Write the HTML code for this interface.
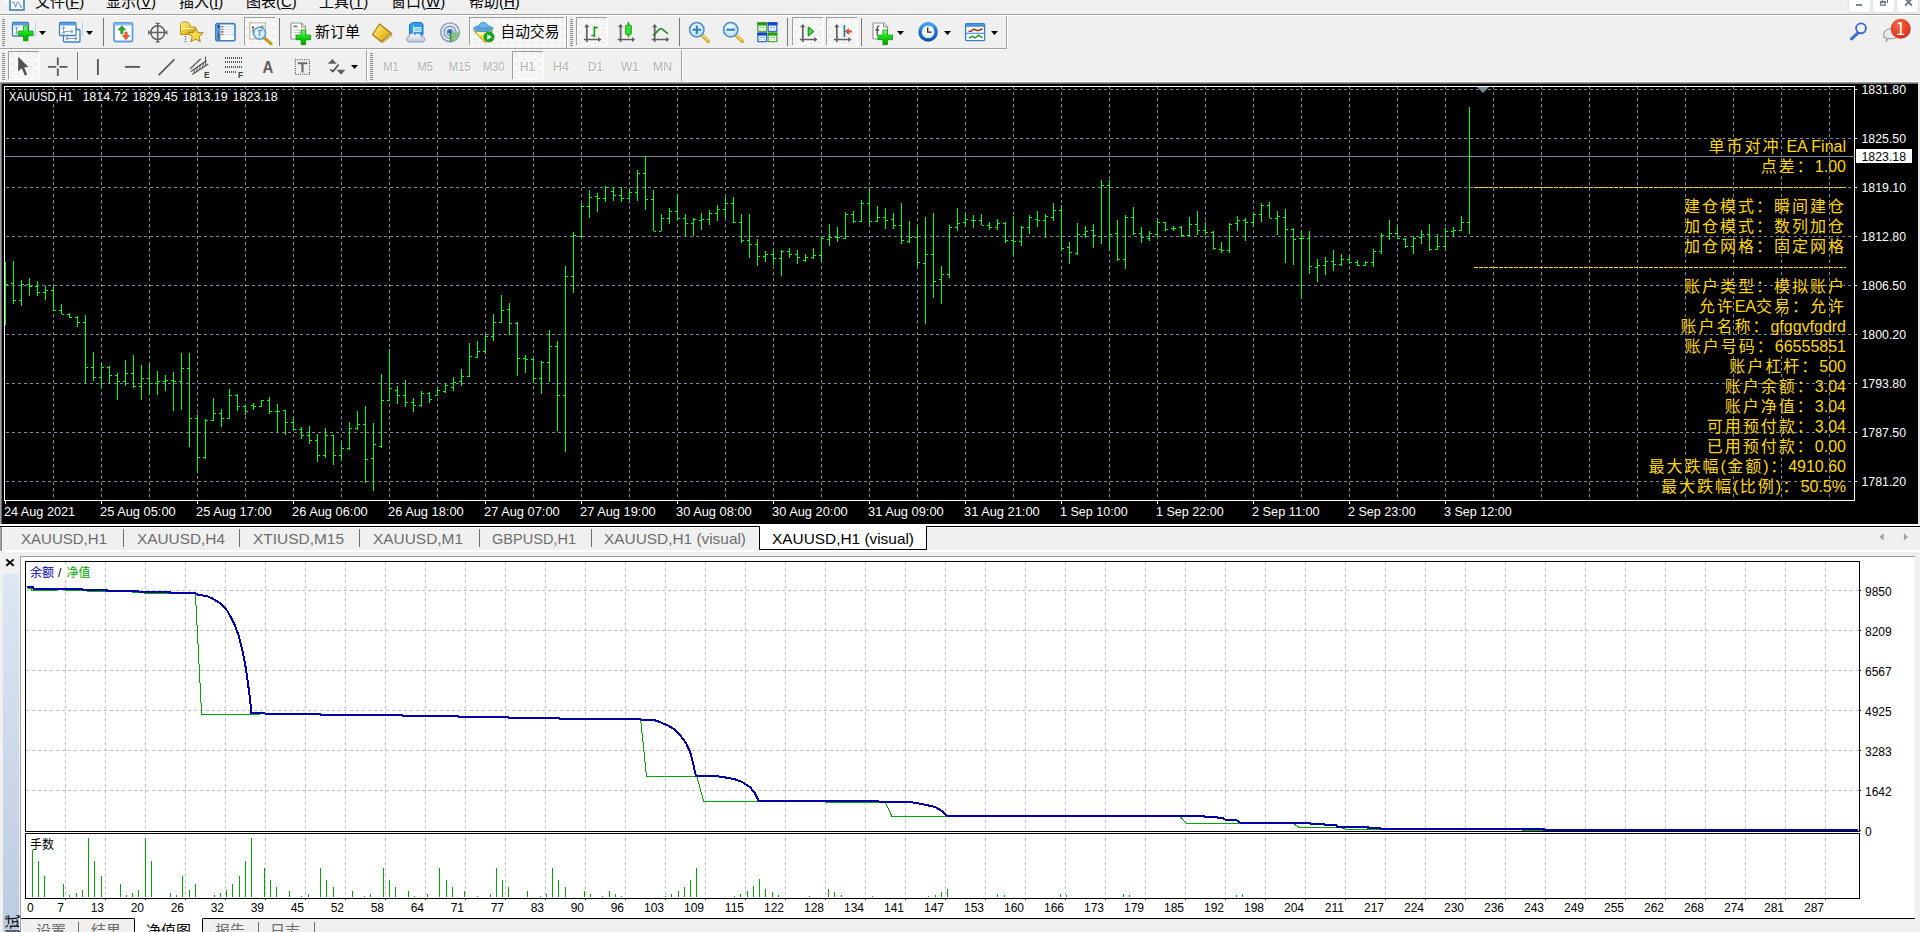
<!DOCTYPE html>
<html lang="zh-CN"><head><meta charset="utf-8"><title>MetaTrader 4</title>
<style>
html,body{margin:0;padding:0}
body{width:1920px;height:932px;overflow:hidden;background:#f0f0f0;position:relative;font-family:"Liberation Sans", "Noto Sans CJK SC", sans-serif;}
.abs{position:absolute}
svg{position:absolute;left:0;top:0;overflow:visible}
svg text{white-space:pre}
.menu{position:absolute;top:-9px;height:22px;line-height:22px;font-size:15px;color:#000;white-space:nowrap}
.menu u{text-decoration:underline;text-underline-offset:1px}
.ytxt{position:absolute;right:74px;height:20px;line-height:20px;white-space:nowrap;color:#ffd700;font-size:16px;font-family:"Liberation Sans",sans-serif}
.ytxt i{font-style:normal;letter-spacing:1.5px}
.ytxt b{font-weight:400;font-family:"Noto Sans CJK SC",sans-serif;font-size:16px;letter-spacing:2px}
</style></head><body>

<div class="abs" style="left:0;top:14px;width:1920px;height:1px;background:#a0a0a0"></div>
<div class="abs" style="left:0;top:15px;width:1920px;height:1px;background:#ffffff"></div>
<div class="menu" style="left:35px;width:47px">文件(<u>F</u>)</div>
<div class="menu" style="left:106px;width:49px">显示(<u>V</u>)</div>
<div class="menu" style="left:179px;width:43px">插入(<u>I</u>)</div>
<div class="menu" style="left:246px;width:49px">图表(<u>C</u>)</div>
<div class="menu" style="left:319px;width:48px">工具(<u>T</u>)</div>
<div class="menu" style="left:391px;width:54px">窗口(<u>W</u>)</div>
<div class="menu" style="left:469px;width:51px">帮助(<u>H</u>)</div>
<div class="abs" style="left:1849px;top:-4px;width:21px;height:16px;background:#fff;border-radius:2.500px;box-shadow:0 0 1px 0.500px #e2e2e2"></div>
<div class="abs" style="left:1873px;top:-4px;width:21px;height:16px;background:#fff;border-radius:2.500px;box-shadow:0 0 1px 0.500px #e2e2e2"></div>
<div class="abs" style="left:1897px;top:-4px;width:21px;height:16px;background:#fff;border-radius:2.500px;box-shadow:0 0 1px 0.500px #e2e2e2"></div>
<svg width="1920" height="60" viewBox="0 0 1920 60">
<rect x="10" y="-6" width="14" height="16" fill="#fff" stroke="#5a96f0" stroke-width="2"/>
<rect x="10" y="-6" width="14" height="16" fill="none" stroke="#5c9a88" stroke-width="2" stroke-dasharray="1.500 2.500"/>
<path d="M5.500 -2V1.500H9" stroke="#fff" stroke-width="1.500" fill="none"/>
<path d="M12 2.200H14L15.600 7.300L17.200 2.200H18.800L20.500 6.500" stroke="#5a8cf0" stroke-width="1" fill="none"/><rect x="20" y="6" width="1.600" height="1.600" fill="#5a8cf0"/>
<path d="M1856 5h6" stroke="#66788e" stroke-width="1.800"/>
<path d="M1880.600 1.900h4.600V5.200h-4.600z" stroke="#66788e" stroke-width="1.300" fill="none"/><path d="M1880 2h6" stroke="#66788e" stroke-width="1.600"/><path d="M1882.500 -2V1.500M1887.500 -2V3" stroke="#66788e" stroke-width="1" fill="none"/>
<path d="M1905.100 -1.400L1911.900 5.600M1911.900 -1.400L1905.100 5.600" stroke="#66788e" stroke-width="1.900"/>
<path d="M1851.500 38.800L1858 32.800" stroke="#2a5cd0" stroke-width="3" stroke-linecap="round"/><path d="M1852 38L1858 32.500" stroke="#6c9cf0" stroke-width="1" stroke-linecap="round"/>
<circle cx="1861" cy="28.300" r="4.900" fill="#f4f4f4" stroke="#3468d8" stroke-width="1.900"/>
<path d="M1884 37c-2-6 4-9 9-8s8 6 2 9c-3 1.200-5 0.600-6.500 0.400l-2.200 2.900l0.300-3.200z" fill="#e8eaf0" stroke="#a0a0a0" stroke-width="1.200"/>
<circle cx="1900.700" cy="28.800" r="10" fill="url(#gred)"/>
<text x="1900.500" y="35" font-size="17" fill="#fff" text-anchor="middle" font-family='"Noto Sans CJK SC", sans-serif'>1</text>
</svg>
<div class="abs" style="left:0;top:48px;width:1007px;height:1px;background:#a0a0a0"></div>
<div class="abs" style="left:0;top:49px;width:1008px;height:1px;background:#ffffff"></div>
<svg width="1920" height="84" viewBox="0 0 1920 84">

<defs>
<pattern id="chk" width="2" height="2" patternUnits="userSpaceOnUse"><rect width="2" height="2" fill="#ffffff"/><rect width="1" height="1" fill="#f0f0f0"/><rect x="1" y="1" width="1" height="1" fill="#f0f0f0"/></pattern>
<linearGradient id="gplus" x1="0" y1="0" x2="0" y2="1"><stop offset="0" stop-color="#7dfc7d"/><stop offset="0.5" stop-color="#12d812"/><stop offset="1" stop-color="#069a06"/></linearGradient>
<linearGradient id="gblue" x1="0" y1="0" x2="0" y2="1"><stop offset="0" stop-color="#6fb0ee"/><stop offset="1" stop-color="#2f76c0"/></linearGradient>
<linearGradient id="ggold" x1="0" y1="0" x2="1" y2="1"><stop offset="0" stop-color="#fff3a0"/><stop offset="0.5" stop-color="#f2c832"/><stop offset="1" stop-color="#b88a10"/></linearGradient>
<radialGradient id="glens" cx="0.4" cy="0.35" r="0.7"><stop offset="0" stop-color="#f4fbff"/><stop offset="1" stop-color="#b6dcf4"/></radialGradient>
<radialGradient id="gred" cx="0.4" cy="0.3" r="0.8"><stop offset="0" stop-color="#f46a4a"/><stop offset="1" stop-color="#d42610"/></radialGradient>
<linearGradient id="gclock" x1="0" y1="0" x2="0" y2="1"><stop offset="0" stop-color="#2c94f4"/><stop offset="1" stop-color="#0a54b8"/></linearGradient>
<linearGradient id="gcloud" x1="0" y1="0" x2="0" y2="1"><stop offset="0" stop-color="#ffffff"/><stop offset="1" stop-color="#b8c4dc"/></linearGradient>
</defs>

<path d="M2 19.5h3 M2 21.5h3 M2 23.5h3 M2 25.5h3 M2 27.5h3 M2 29.5h3 M2 31.5h3 M2 33.5h3 M2 35.5h3 M2 37.5h3 M2 39.5h3 M2 41.5h3 M2 43.5h3 M2 45.5h3" stroke="#8e8e8e" stroke-width="1" shape-rendering="crispEdges"/>
<rect x="12.5" y="22.5" width="16" height="13.500" rx="1" fill="#fff" stroke="#3b7fc4" stroke-width="1.3"/>
<rect x="13" y="23" width="15" height="2.500" fill="#5a9ee0"/>
<path d="M16.500 27V34M15 28.500L16.500 26.800L18 28.500M15 32.500L16.500 34.200L18 32.500" stroke="#8aa6c4" stroke-width="1" fill="none"/>
<path d="M23.4 26.0h4.6v5.1000000000000005h5.1000000000000005v4.6h-5.1000000000000005v5.1000000000000005h-4.6v-5.1000000000000005h-5.1000000000000005v-4.6h5.1000000000000005z" fill="url(#gplus)" stroke="#0a9a0a" stroke-width="0.8" stroke-linejoin="round"/>
<path d="M35.500 22V36" stroke="#b9d0ec" stroke-width="1"/>
<path d="M39 31h7l-3.5 4z" fill="#000"/>
<rect x="63.500" y="29.500" width="16.500" height="12.500" rx="1" fill="#fff" stroke="#3b7fc4" stroke-width="1.3"/>
<path d="M66 38.500H77M66 38.500l2-1.600M66 38.500l2 1.600M77 38.500l-2-1.600M77 38.500l-2 1.600" stroke="#7f9cba" stroke-width="1.100" fill="none"/>
<rect x="59.500" y="22.500" width="16.500" height="13" rx="1" fill="#fff" stroke="#3b7fc4" stroke-width="1.3"/>
<rect x="60" y="23" width="15.500" height="2.500" fill="#5a9ee0"/>
<path d="M63.500 27V33.500M62 28.500L63.500 26.800L65 28.500M62 32L63.500 33.700L65 32M63 31.500H73M73 31.500l-2-1.600M73 31.500l-2 1.600" stroke="#8aa6c4" stroke-width="1.100" fill="none"/>
<path d="M82.500 22V36" stroke="#b9d0ec" stroke-width="1"/>
<path d="M86 31h7l-3.5 4z" fill="#000"/>
<path d="M103.5 18V46" stroke="#787878" stroke-width="1" shape-rendering="crispEdges"/>
<rect x="114" y="23" width="18.500" height="18.500" rx="1.500" fill="#fff" stroke="#5aa0e4" stroke-width="1.800"/>
<rect x="114.500" y="23.500" width="17.500" height="2" fill="#8cc0f2"/>
<path d="M120.700 33.800V30h-2.600L121.800 25.800L125.600 30h-2.600v3.800z" fill="#22b022" stroke="#128a12" stroke-width="0.6"/>
<path d="M124.800 32.200V35.600h-2.400L126 39.800L129.600 35.600h-2.400V32.200z" fill="#f06030" stroke="#c8400e" stroke-width="0.6"/>
<circle cx="157.700" cy="32.600" r="6.900" fill="none" stroke="#606060" stroke-width="1.600"/>
<path d="M157.700 23V42.200M148.200 32.600H167.200" stroke="#606060" stroke-width="1.500"/>
<path d="M155.700 23.400h4M155.700 41.800h4M148.600 30.600v4M166.800 30.600v4" stroke="#606060" stroke-width="1.200"/>
<path d="M180.500 34.500V24.500q0-1 1-1.800l1.500-0.700h4.500l2.500 2.500v2.500h5v7.500z" fill="url(#ggold)" stroke="#b8901c" stroke-width="1"/>
<path d="M181 28.500H194.500" stroke="#fff6c0" stroke-width="1.200"/>
<path d="M185.500 36v7" stroke="#404040" stroke-width="1.200" stroke-dasharray="1 1.500"/>
<path d="M195.600 27.300L197.700 32.400L203.200 32.800L199 36.400L200.300 41.800L195.600 38.900L190.900 41.800L192.200 36.400L188 32.800L193.500 32.400z" fill="#f6d848" stroke="#b08414" stroke-width="1" stroke-linejoin="round"/>
<rect x="215.800" y="23.600" width="19.200" height="17.200" rx="1.800" fill="#fff" stroke="#3b7fc4" stroke-width="1.600"/>
<rect x="216.500" y="24.300" width="4" height="15.800" fill="#4a8fd6"/>
<path d="M221.500 27H234M221.500 29.500H234M221.500 32H234M221.500 34.500H234" stroke="#c8dcf6" stroke-width="1.200"/>
<rect x="221.300" y="26" width="2" height="1.300" fill="#f04040"/><rect x="221.300" y="28.600" width="2" height="1.300" fill="#609060"/><rect x="221.300" y="31.200" width="2" height="1.300" fill="#306030"/><rect x="221.300" y="33.700" width="2" height="1.300" fill="#f04040"/>
<circle cx="218.500" cy="26.500" r="0.900" fill="#101010"/><rect x="217.800" y="33.500" width="1.400" height="5" fill="#505860"/>
<rect x="245" y="18" width="30" height="27" fill="url(#chk)" shape-rendering="crispEdges"/><path d="M244.5 45V17.5H275" stroke="#a0a0a0" stroke-width="1" fill="none" shape-rendering="crispEdges"/><path d="M245 45.5H275.5V18" stroke="#ffffff" stroke-width="1" fill="none" shape-rendering="crispEdges"/>
<rect x="249.700" y="22.800" width="15.600" height="16.200" fill="#fcfcf8" stroke="#c8c0a8" stroke-width="1.300"/>
<path d="M253 26V33M252 27.500h2M262 25.500v7M260.500 27h3" stroke="#505050" stroke-width="1"/>
<path d="M264.500 38L271 43.600" stroke="#c49a18" stroke-width="3.200" stroke-linecap="round"/>
<circle cx="259.600" cy="33.200" r="6" fill="url(#glens)" fill-opacity="0.88" stroke="#5a9ede" stroke-width="1.500"/>
<path d="M257.500 30.500h4.500M259.500 30.500v5.500" stroke="#8098b0" stroke-width="1.600"/>
<path d="M279.5 18V46" stroke="#787878" stroke-width="1" shape-rendering="crispEdges"/>
<path d="M291 23h10.500l4 4V39H291z" fill="#fff" stroke="#949494" stroke-width="1.200" stroke-linejoin="round"/>
<path d="M301.500 23v4h4" fill="#e8e8e8" stroke="#949494" stroke-width="1"/>
<path d="M293.500 26.500h4" stroke="#707070" stroke-width="1.600"/><path d="M293.500 30h9M293.500 32.500h9M293.500 35h5" stroke="#c4c4c4" stroke-width="1.100"/>
<path d="M301.09999999999997 30.099999999999998h4.6v5.0h5.0v4.6h-5.0v5.0h-4.6v-5.0h-5.0v-4.6h5.0z" fill="url(#gplus)" stroke="#0a9a0a" stroke-width="0.8" stroke-linejoin="round"/>
<text x="315" y="37.300" font-size="15" fill="#000" font-family='"Liberation Sans", "Noto Sans CJK SC", sans-serif' textLength="45" lengthAdjust="spacingAndGlyphs">新订单</text>
<path d="M372.500 34.500L379.500 24L391.500 33.500L381.500 42z" fill="url(#ggold)" stroke="#a87a10" stroke-width="1.200" stroke-linejoin="round"/>
<path d="M381.500 42L391.500 33.500L392 35.500L382.500 42.500z" fill="#f4ecc0" stroke="#a87a10" stroke-width="0.800"/>
<path d="M409.500 24.500L413 22.500h8.500l1.500 2V35h-13.500z" fill="#2f9af0" stroke="#1878d0" stroke-width="1"/>
<path d="M413.500 25.500V35M414.500 27.500h6.500v4h-6.500z" fill="#8cd0fa" stroke="#d8f0ff" stroke-width="0.900"/>
<path d="M410 42c-4 0-4.600-4.800-1-5.400c0-3.400 4.600-4.200 6-1.600c1.600-2.600 6.400-1.600 6 1.600c4.200-0.600 5.600 5.400 1 5.400z" fill="url(#gcloud)" stroke="#8a9cc0" stroke-width="1"/>
<circle cx="450" cy="32.300" r="9.300" fill="none" stroke="#90a4c4" stroke-width="1.700"/>
<circle cx="450" cy="32.300" r="6" fill="none" stroke="#8098c0" stroke-width="1.500"/>
<circle cx="450" cy="32.300" r="3" fill="none" stroke="#7090c0" stroke-width="1.300"/>
<path d="M450.300 32.300V42Q460 41 459.800 32.300" fill="#7eb87e" fill-opacity="0.75" stroke="none"/>
<path d="M450.600 33v9" stroke="#28a428" stroke-width="1.800"/>
<circle cx="449.800" cy="31.700" r="1.900" fill="#2858d0"/>
<rect x="470" y="18" width="94" height="27" fill="url(#chk)" shape-rendering="crispEdges"/><path d="M469.5 45V17.5H564" stroke="#a0a0a0" stroke-width="1" fill="none" shape-rendering="crispEdges"/><path d="M470 45.5H564.5V18" stroke="#ffffff" stroke-width="1" fill="none" shape-rendering="crispEdges"/>
<path d="M474.500 31.500L485 42.500L492.500 31z" fill="#f4d83c" stroke="#b8941c" stroke-width="1"/>
<path d="M476 31.500h15l-3 4h-9z" fill="#fff4a8"/>
<ellipse cx="483.300" cy="28.600" rx="9.800" ry="3.100" fill="#58a8e0" stroke="#3c86c0" stroke-width="0.800"/>
<path d="M478.300 28c0-7.500 10-7.500 10 0z" fill="#6cb8ea" stroke="#3c86c0" stroke-width="0.800"/>
<circle cx="489" cy="37" r="5" fill="#18a818" stroke="#0c8a0c" stroke-width="0.800"/><path d="M487.300 34.200v5.600l4.600-2.800z" fill="#fff"/>
<text x="500.500" y="37.300" font-size="15" fill="#000" font-family='"Liberation Sans", "Noto Sans CJK SC", sans-serif' textLength="59" lengthAdjust="spacingAndGlyphs">自动交易</text>
<path d="M566.500 16V48" stroke="#a0a0a0" stroke-width="1" shape-rendering="crispEdges"/><path d="M567.500 16V48" stroke="#fff" stroke-width="1" shape-rendering="crispEdges"/>
<path d="M570 19.5h3 M570 21.5h3 M570 23.5h3 M570 25.5h3 M570 27.5h3 M570 29.5h3 M570 31.5h3 M570 33.5h3 M570 35.5h3 M570 37.5h3 M570 39.5h3 M570 41.5h3 M570 43.5h3 M570 45.5h3" stroke="#8e8e8e" stroke-width="1" shape-rendering="crispEdges"/>
<rect x="577" y="18" width="30" height="27" fill="url(#chk)" shape-rendering="crispEdges"/><path d="M576.5 45V17.5H607" stroke="#a0a0a0" stroke-width="1" fill="none" shape-rendering="crispEdges"/><path d="M577 45.5H607.5V18" stroke="#ffffff" stroke-width="1" fill="none" shape-rendering="crispEdges"/>
<path d="M586.8 25V42.0M583.8 39.5H599.8" stroke="#606060" stroke-width="1.7" fill="none"/><path d="M584.1999999999999 27.2L586.8 24L589.4 27.2z M598.1999999999999 36.9L601.4 39.5L598.1999999999999 42.1z" fill="#606060"/>
<path d="M594.400 26.300V37.200M594.400 27.700h3.300M591.400 35.500h3" stroke="#18a018" stroke-width="1.700" fill="none"/>
<path d="M620.6 25V42.0M617.6 39.5H633.6" stroke="#606060" stroke-width="1.7" fill="none"/><path d="M618.0 27.2L620.6 24L623.2 27.2z M632.0 36.9L635.2 39.5L632.0 42.1z" fill="#606060"/>
<path d="M628.400 22V37.200" stroke="#18a018" stroke-width="1.600"/><rect x="625.600" y="25.200" width="5.700" height="9.400" rx="0.800" fill="#3cdc3c" stroke="#18a018" stroke-width="1"/>
<path d="M654.7 25V42.0M651.7 39.5H667.7" stroke="#606060" stroke-width="1.7" fill="none"/><path d="M652.1 27.2L654.7 24L657.3000000000001 27.2z M666.1 36.9L669.3000000000001 39.5L666.1 42.1z" fill="#606060"/>
<path d="M653 35.500C657 33 658.500 28.300 661 28.600C663.500 29 665 32.500 668 33.600" stroke="#2c8c2c" stroke-width="1.700" fill="none"/>
<path d="M679.5 18V46" stroke="#787878" stroke-width="1" shape-rendering="crispEdges"/>
<path d="M701.8 35L708.3 41.3" stroke="#d0a828" stroke-width="3.600" stroke-linecap="round"/>
<path d="M702.0999999999999 34.7L707.8 40.3" stroke="#f4e080" stroke-width="1.200" stroke-linecap="round"/>
<circle cx="696.8" cy="29.700" r="7.200" fill="url(#glens)" stroke="#4a8ed2" stroke-width="1.500"/>
<path d="M692.5 29.700h8.600M696.8 25.400v8.600" stroke="#2c82b4" stroke-width="2.100"/>
<path d="M735.7 35L742.2 41.3" stroke="#d0a828" stroke-width="3.600" stroke-linecap="round"/>
<path d="M736.0 34.7L741.7 40.3" stroke="#f4e080" stroke-width="1.200" stroke-linecap="round"/>
<circle cx="730.7" cy="29.700" r="7.200" fill="url(#glens)" stroke="#4a8ed2" stroke-width="1.500"/>
<path d="M726.4000000000001 29.700h8.600" stroke="#2c82b4" stroke-width="2.100"/>
<rect x="757.2" y="22.3" width="10" height="9.800" rx="0.800" fill="#46b030"/><rect x="757.2" y="22.3" width="10" height="2.400" rx="0.800" fill="#2a9414"/>
<rect x="758.5" y="25.7" width="7.400" height="5.200" fill="#fff" fill-opacity="0.950"/>
<path d="M759.5 27.3h5.400M759.5 29.3h1.400M763.5 29.3h1.400" stroke="#8ed080" stroke-width="1"/>
<rect x="767.5" y="22.3" width="10" height="9.800" rx="0.800" fill="#3068e4"/><rect x="767.5" y="22.3" width="10" height="2.400" rx="0.800" fill="#1840b8"/>
<rect x="768.8" y="25.7" width="7.400" height="5.200" fill="#fff" fill-opacity="0.950"/>
<path d="M769.8 27.3h5.400M769.8 29.3h1.400M773.8 29.3h1.400" stroke="#88a8f0" stroke-width="1"/>
<rect x="757.2" y="32.4" width="10" height="9.800" rx="0.800" fill="#3068e4"/><rect x="757.2" y="32.4" width="10" height="2.400" rx="0.800" fill="#1840b8"/>
<rect x="758.5" y="35.8" width="7.400" height="5.200" fill="#fff" fill-opacity="0.950"/>
<path d="M759.5 37.4h5.400M759.5 39.4h1.400M763.5 39.4h1.400" stroke="#88a8f0" stroke-width="1"/>
<rect x="767.5" y="32.4" width="10" height="9.800" rx="0.800" fill="#46b030"/><rect x="767.5" y="32.4" width="10" height="2.400" rx="0.800" fill="#2a9414"/>
<rect x="768.8" y="35.8" width="7.400" height="5.200" fill="#fff" fill-opacity="0.950"/>
<path d="M769.8 37.4h5.400M769.8 39.4h1.400M773.8 39.4h1.400" stroke="#8ed080" stroke-width="1"/>
<path d="M787.5 18V46" stroke="#787878" stroke-width="1" shape-rendering="crispEdges"/>
<rect x="793" y="18" width="30" height="27" fill="url(#chk)" shape-rendering="crispEdges"/><path d="M792.5 45V17.5H823" stroke="#a0a0a0" stroke-width="1" fill="none" shape-rendering="crispEdges"/><path d="M793 45.5H823.5V18" stroke="#ffffff" stroke-width="1" fill="none" shape-rendering="crispEdges"/>
<path d="M802.8 25V42.0M799.8 39.5H815.8" stroke="#606060" stroke-width="1.7" fill="none"/><path d="M800.1999999999999 27.2L802.8 24L805.4 27.2z M814.1999999999999 36.9L817.4 39.5L814.1999999999999 42.1z" fill="#606060"/>
<path d="M808.300 27.200V35.800L813.600 31.500z" fill="#5cd85c" stroke="#18a018" stroke-width="1.300" stroke-linejoin="round"/>
<rect x="827" y="18" width="30" height="27" fill="url(#chk)" shape-rendering="crispEdges"/><path d="M826.5 45V17.5H857" stroke="#a0a0a0" stroke-width="1" fill="none" shape-rendering="crispEdges"/><path d="M827 45.5H857.5V18" stroke="#ffffff" stroke-width="1" fill="none" shape-rendering="crispEdges"/>
<path d="M836.8 25V42.0M833.8 39.5H849.8" stroke="#606060" stroke-width="1.7" fill="none"/><path d="M834.1999999999999 27.2L836.8 24L839.4 27.2z M848.1999999999999 36.9L851.4 39.5L848.1999999999999 42.1z" fill="#606060"/>
<path d="M844.400 25V37" stroke="#1c74b0" stroke-width="1.600"/>
<path d="M845.300 31.500L848.800 28.600V30.700H851.500V32.300H848.800V34.400z" fill="#e05010" stroke="#c84008" stroke-width="0.500"/>
<path d="M861.5 18V46" stroke="#787878" stroke-width="1" shape-rendering="crispEdges"/>
<path d="M873 23h10.500l4 4V39H873z" fill="#fff" stroke="#949494" stroke-width="1.200" stroke-linejoin="round"/>
<path d="M883.500 23v4h4" fill="#e8e8e8" stroke="#949494" stroke-width="1"/>
<path d="M879.500 26.200q-2.300-0.600-2.300 2v7.300M875.500 30h3.600" stroke="#505040" stroke-width="1.300" fill="none"/>
<path d="M882.9000000000001 30.099999999999998h4.6v5.0h5.0v4.6h-5.0v5.0h-4.6v-5.0h-5.0v-4.6h5.0z" fill="url(#gplus)" stroke="#0a9a0a" stroke-width="0.8" stroke-linejoin="round"/>
<path d="M897 31h7l-3.5 4z" fill="#000"/>
<circle cx="928.100" cy="31.900" r="8.100" fill="#f6f6f6" stroke="url(#gclock)" stroke-width="3.400"/>
<path d="M921.300 27.300A8.100 8.100 0 0 1 934.500 26.900" stroke="#48a8fa" stroke-width="1.300" fill="none"/>
<path d="M927.700 27.400V32.100H931.600" stroke="#202020" stroke-width="1.300" fill="none"/>
<path d="M928.100 26v1M928.100 36.800v1M922.300 31.900h1M933 31.900h1M924 27.800l0.600 0.600M932.200 27.800l-0.600 0.600M924 36l0.600-0.600M932.200 36l-0.600-0.600" stroke="#b0b0b0" stroke-width="0.800"/>
<path d="M944 31h7l-3.5 4z" fill="#000"/>
<rect x="965.600" y="23.600" width="19" height="17" rx="1" fill="#fff" stroke="#3b7fc4" stroke-width="1.400"/>
<rect x="966" y="24" width="18.200" height="2.800" fill="#4a90dc"/>
<path d="M966 33.300H984.500" stroke="#5a9ee0" stroke-width="1.300"/>
<path d="M968.500 31.300H971L974 29.200L977 30.400H979L982.500 28.800" stroke="#a83018" stroke-width="1.500" fill="none"/>
<path d="M969 38L972.500 36.400L975 37.800L979 35.200L982.500 38" stroke="#1c9c2c" stroke-width="1.500" fill="none"/>
<path d="M991 31h7l-3.5 4z" fill="#000"/>
<path d="M1006.500 16V48" stroke="#a0a0a0" stroke-width="1" shape-rendering="crispEdges"/><path d="M1007.500 16V48" stroke="#fff" stroke-width="1" shape-rendering="crispEdges"/>
<path d="M2 53.5h3 M2 55.5h3 M2 57.5h3 M2 59.5h3 M2 61.5h3 M2 63.5h3 M2 65.5h3 M2 67.5h3 M2 69.5h3 M2 71.5h3 M2 73.5h3 M2 75.5h3 M2 77.5h3 M2 79.5h3" stroke="#8e8e8e" stroke-width="1" shape-rendering="crispEdges"/>
<rect x="9" y="52" width="30" height="27" fill="url(#chk)" shape-rendering="crispEdges"/><path d="M8.5 79V51.5H39" stroke="#a0a0a0" stroke-width="1" fill="none" shape-rendering="crispEdges"/><path d="M9 79.5H39.5V52" stroke="#ffffff" stroke-width="1" fill="none" shape-rendering="crispEdges"/>
<path d="M18.200 56.800V71.600L21.700 68.300L24.900 75.600L27.200 74.500L24.100 67.500L28.400 67.100z" fill="#505050"/>
<path d="M57.800 57.500V65.300M57.800 68.500V76M48.100 66.900H56.200M59.400 66.900H67.500" stroke="#5a5a5a" stroke-width="1.800"/>
<path d="M77.5 52V80" stroke="#787878" stroke-width="1" shape-rendering="crispEdges"/>
<path d="M97.900 59V75" stroke="#5a5a5a" stroke-width="1.900"/>
<path d="M124.900 66.900H140.100" stroke="#5a5a5a" stroke-width="1.900"/>
<path d="M158.700 75.100L174.400 59.300" stroke="#5a5a5a" stroke-width="1.700"/>
<path d="M190.2 68.700L200.800 58.800M190.800 71.500L206.500 60.800M192.300 74.500L208.300 64" stroke="#5a5a5a" stroke-width="1.300"/>
<path d="M194 73.300l0.500-4.600M196.500 71.800l1-5M199.500 70l0.800-5.200M202.500 68l1-5.200M205.500 66l0-9.500" stroke="#5a5a5a" stroke-width="1.100" />
<text x="204" y="77.600" font-size="8.500" font-weight="bold" fill="#404040" font-family='"Liberation Sans", "Noto Sans CJK SC", sans-serif'>E</text>
<path d="M225 58H243M225 62H243M225 67H243M225 72H237" stroke="#5a5a5a" stroke-width="2" stroke-dasharray="1 1" shape-rendering="crispEdges"/>
<text x="238" y="77.600" font-size="8.500" font-weight="bold" fill="#404040" font-family='"Liberation Sans", "Noto Sans CJK SC", sans-serif'>F</text>
<text x="262.600" y="72.500" font-size="16" font-weight="bold" fill="#5e5e5e" font-family='"Liberation Sans", "Noto Sans CJK SC", sans-serif' textLength="10.800" lengthAdjust="spacingAndGlyphs">A</text>
<rect x="295.300" y="59.700" width="14.200" height="14.600" fill="none" stroke="#404040" stroke-width="1.100" stroke-dasharray="1 1.200"/>
<path d="M297.800 63.200H307.300M302.500 63.200V72.400" stroke="#686868" stroke-width="2.100"/>
<path d="M327.700 63.800L332.300 58.900L336.900 63.800z" fill="#606060"/><path d="M330.300 69.300L332.900 71.600L338.600 64.400" stroke="#505050" stroke-width="1.600" fill="none"/><path d="M336.700 69.800L341 74.700L345.300 69.800z" fill="#606060"/>
<path d="M351 65h7l-3.5 4z" fill="#000"/>
<path d="M366.500 50V82" stroke="#a0a0a0" stroke-width="1" shape-rendering="crispEdges"/><path d="M367.500 50V82" stroke="#fff" stroke-width="1" shape-rendering="crispEdges"/>
<path d="M370 53.5h3 M370 55.5h3 M370 57.5h3 M370 59.5h3 M370 61.5h3 M370 63.5h3 M370 65.5h3 M370 67.5h3 M370 69.5h3 M370 71.5h3 M370 73.5h3 M370 75.5h3 M370 77.5h3 M370 79.5h3" stroke="#8e8e8e" stroke-width="1" shape-rendering="crispEdges"/>
<rect x="513" y="52" width="30" height="27" fill="url(#chk)" shape-rendering="crispEdges"/><path d="M512.5 79V51.5H543" stroke="#a0a0a0" stroke-width="1" fill="none" shape-rendering="crispEdges"/><path d="M513 79.5H543.5V52" stroke="#ffffff" stroke-width="1" fill="none" shape-rendering="crispEdges"/>
<text x="384.3" y="72" font-size="12" fill="#ffffff" font-family='"Liberation Sans", "Noto Sans CJK SC", sans-serif' textLength="15.5" lengthAdjust="spacingAndGlyphs">M1</text>
<text x="383.3" y="71" font-size="12" fill="#b2b2b2" font-family='"Liberation Sans", "Noto Sans CJK SC", sans-serif' textLength="15.5" lengthAdjust="spacingAndGlyphs">M1</text>
<text x="418.5" y="72" font-size="12" fill="#ffffff" font-family='"Liberation Sans", "Noto Sans CJK SC", sans-serif' textLength="15.4" lengthAdjust="spacingAndGlyphs">M5</text>
<text x="417.5" y="71" font-size="12" fill="#b2b2b2" font-family='"Liberation Sans", "Noto Sans CJK SC", sans-serif' textLength="15.4" lengthAdjust="spacingAndGlyphs">M5</text>
<text x="449.8" y="72" font-size="12" fill="#ffffff" font-family='"Liberation Sans", "Noto Sans CJK SC", sans-serif' textLength="22" lengthAdjust="spacingAndGlyphs">M15</text>
<text x="448.8" y="71" font-size="12" fill="#b2b2b2" font-family='"Liberation Sans", "Noto Sans CJK SC", sans-serif' textLength="22" lengthAdjust="spacingAndGlyphs">M15</text>
<text x="483.9" y="72" font-size="12" fill="#ffffff" font-family='"Liberation Sans", "Noto Sans CJK SC", sans-serif' textLength="21.7" lengthAdjust="spacingAndGlyphs">M30</text>
<text x="482.9" y="71" font-size="12" fill="#b2b2b2" font-family='"Liberation Sans", "Noto Sans CJK SC", sans-serif' textLength="21.7" lengthAdjust="spacingAndGlyphs">M30</text>
<text x="521" y="72" font-size="12" fill="#ffffff" font-family='"Liberation Sans", "Noto Sans CJK SC", sans-serif' textLength="15" lengthAdjust="spacingAndGlyphs">H1</text>
<text x="520" y="71" font-size="12" fill="#b2b2b2" font-family='"Liberation Sans", "Noto Sans CJK SC", sans-serif' textLength="15" lengthAdjust="spacingAndGlyphs">H1</text>
<text x="554" y="72" font-size="12" fill="#ffffff" font-family='"Liberation Sans", "Noto Sans CJK SC", sans-serif' textLength="16" lengthAdjust="spacingAndGlyphs">H4</text>
<text x="553" y="71" font-size="12" fill="#b2b2b2" font-family='"Liberation Sans", "Noto Sans CJK SC", sans-serif' textLength="16" lengthAdjust="spacingAndGlyphs">H4</text>
<text x="589" y="72" font-size="12" fill="#ffffff" font-family='"Liberation Sans", "Noto Sans CJK SC", sans-serif' textLength="15" lengthAdjust="spacingAndGlyphs">D1</text>
<text x="588" y="71" font-size="12" fill="#b2b2b2" font-family='"Liberation Sans", "Noto Sans CJK SC", sans-serif' textLength="15" lengthAdjust="spacingAndGlyphs">D1</text>
<text x="622" y="72" font-size="12" fill="#ffffff" font-family='"Liberation Sans", "Noto Sans CJK SC", sans-serif' textLength="18" lengthAdjust="spacingAndGlyphs">W1</text>
<text x="621" y="71" font-size="12" fill="#b2b2b2" font-family='"Liberation Sans", "Noto Sans CJK SC", sans-serif' textLength="18" lengthAdjust="spacingAndGlyphs">W1</text>
<text x="654" y="72" font-size="12" fill="#ffffff" font-family='"Liberation Sans", "Noto Sans CJK SC", sans-serif' textLength="19" lengthAdjust="spacingAndGlyphs">MN</text>
<text x="653" y="71" font-size="12" fill="#b2b2b2" font-family='"Liberation Sans", "Noto Sans CJK SC", sans-serif' textLength="19" lengthAdjust="spacingAndGlyphs">MN</text>
<path d="M681.500 50V82" stroke="#a0a0a0" stroke-width="1" shape-rendering="crispEdges"/><path d="M682.500 50V82" stroke="#fff" stroke-width="1" shape-rendering="crispEdges"/>
</svg>
<div class="abs" style="left:0;top:81px;width:1920px;height:1px;background:#fafafa"></div>
<div class="abs" style="left:0;top:82px;width:1920px;height:1px;background:#a0a0a0"></div>
<div class="abs" style="left:0;top:83px;width:1918px;height:441px;background:#000"></div>
<div class="abs" style="left:0;top:83px;width:1918px;height:1px;background:#696969"></div>
<div class="abs" style="left:0;top:82px;width:1px;height:442px;background:#a0a0a0"></div>
<div class="abs" style="left:1px;top:83px;width:1px;height:441px;background:#696969"></div>
<div class="abs" style="left:1918px;top:82px;width:2px;height:444px;background:#e3e3e3"></div>
<div class="abs" style="left:0;top:524px;width:1920px;height:2px;background:#ffffff"></div>
<div class="abs" style="left:0px;top:526px;width:1920px;height:1px;background:#000"></div>
<div class="abs" style="left:2px;top:527px;width:1918px;height:1px;background:#fff"></div>
<div class="abs" style="left:0;top:550px;width:1920px;height:2px;background:#fff"></div>
<div class="abs" style="left:0;top:527px;width:1px;height:24px;background:#a0a0a0"></div>
<div class="abs" style="left:1px;top:527px;width:1px;height:24px;background:#8c8c8c"></div>
<svg width="1920" height="932" viewBox="0 0 1920 932" shape-rendering="crispEdges">
<path d="M53.5 86V500 M101.5 86V500 M149.5 86V500 M197.5 86V500 M245.5 86V500 M293.5 86V500 M341.5 86V500 M389.5 86V500 M437.5 86V500 M485.5 86V500 M533.5 86V500 M581.5 86V500 M629.5 86V500 M677.5 86V500 M725.5 86V500 M773.5 86V500 M821.5 86V500 M869.5 86V500 M917.5 86V500 M965.5 86V500 M1013.5 86V500 M1061.5 86V500 M1109.5 86V500 M1157.5 86V500 M1205.5 86V500 M1253.5 86V500 M1301.5 86V500 M1349.5 86V500 M1397.5 86V500 M1445.5 86V500 M1493.5 86V500 M1541.5 86V500 M1589.5 86V500 M1637.5 86V500 M1685.5 86V500 M1733.5 86V500 M1781.5 86V500 M1829.5 86V500 M6 89.5H1854 M6 138.5H1854 M6 187.5H1854 M6 236.5H1854 M6 285.5H1854 M6 334.5H1854 M6 383.5H1854 M6 432.5H1854 M6 481.5H1854" stroke="#778899" stroke-width="1" stroke-dasharray="3 3" fill="none"/>
<path d="M4.5 86V500.5H1854.5V86.5H4" stroke="#fff" stroke-width="1" fill="none"/>
<path d="M1855 89.5H1857 M1855 138.5H1857 M1855 187.5H1857 M1855 236.5H1857 M1855 285.5H1857 M1855 334.5H1857 M1855 383.5H1857 M1855 432.5H1857 M1855 481.5H1857 M5.5 501V504 M101.5 501V504 M197.5 501V504 M293.5 501V504 M389.5 501V504 M485.5 501V504 M581.5 501V504 M677.5 501V504 M773.5 501V504 M869.5 501V504 M965.5 501V504 M1061.5 501V504 M1157.5 501V504 M1253.5 501V504 M1349.5 501V504 M1445.5 501V504" stroke="#fff" stroke-width="1" fill="none"/>
<path d="M5 156.5H1855" stroke="#778899" stroke-width="1" fill="none"/>
<path d="M5.5 262V325 M6 284.5H8 M13.5 261V304 M11 283.5H13 M14 300.5H16 M21.5 280V306 M19 300.5H21 M22 284.5H24 M29.5 278V296 M27 284.5H29 M30 286.5H32 M37.5 281V296 M35 286.5H37 M38 292.5H40 M45.5 286V300 M43 292.5H45 M46 290.5H48 M53.5 286V311 M51 290.5H53 M54 310.5H56 M61.5 304V314 M59 310.5H61 M62 314.5H64 M69.5 313V318 M67 314.5H69 M70 317.5H72 M77.5 316V327 M75 317.5H77 M78 322.5H80 M85.5 315V383 M83 322.5H85 M86 367.5H88 M93.5 352V381 M91 367.5H93 M94 377.5H96 M101.5 363V388 M99 377.5H101 M102 367.5H104 M109.5 366V383 M107 367.5H109 M110 375.5H112 M117.5 373V400 M115 375.5H117 M118 381.5H120 M125.5 360V386 M123 381.5H125 M126 373.5H128 M133.5 355V388 M131 373.5H133 M134 386.5H136 M141.5 365V400 M139 386.5H141 M142 378.5H144 M149.5 363V395 M147 378.5H149 M150 383.5H152 M157.5 371V395 M155 383.5H157 M158 381.5H160 M165.5 375V391 M163 381.5H165 M166 380.5H168 M173.5 372V411 M171 380.5H173 M174 381.5H176 M181.5 353V410 M179 381.5H181 M182 368.5H184 M189.5 353V447 M187 368.5H189 M190 418.5H192 M197.5 414V473 M195 418.5H197 M198 457.5H200 M205.5 419V459 M203 457.5H205 M206 420.5H208 M213.5 398V421 M211 420.5H213 M214 413.5H216 M221.5 409V427 M219 413.5H221 M222 418.5H224 M229.5 389V419 M227 418.5H229 M230 395.5H232 M237.5 394V411 M235 395.5H237 M238 406.5H240 M245.5 404V415 M243 406.5H245 M246 411.5H248 M253.5 403V410 M251 405.5H253 M254 406.5H256 M261.5 400V407 M259 406.5H261 M262 400.5H264 M269.5 397V414 M267 400.5H269 M270 411.5H272 M277.5 404V432 M275 411.5H277 M278 411.5H280 M285.5 410V435 M283 410.5H285 M286 422.5H288 M293.5 418V431 M291 422.5H293 M294 429.5H296 M301.5 427V439 M299 429.5H301 M302 435.5H304 M309.5 426V444 M307 435.5H309 M310 440.5H312 M317.5 434V462 M315 440.5H317 M318 455.5H320 M325.5 428V458 M323 455.5H325 M326 435.5H328 M333.5 435V465 M331 435.5H333 M334 455.5H336 M341.5 443V461 M339 455.5H341 M342 448.5H344 M349.5 422V450 M347 448.5H349 M350 428.5H352 M357.5 411V430 M355 428.5H357 M358 424.5H360 M365.5 406V483 M363 424.5H365 M366 459.5H368 M373.5 423V491 M371 458.5H373 M374 444.5H376 M381.5 374V448 M379 446.5H381 M382 400.5H384 M389.5 349V401 M387 400.5H389 M390 388.5H392 M397.5 386V404 M395 390.5H397 M398 395.5H400 M405.5 380V407 M403 395.5H405 M406 402.5H408 M413.5 398V412 M411 402.5H413 M414 405.5H416 M421.5 391V407 M419 405.5H421 M422 393.5H424 M429.5 392V403 M427 393.5H429 M430 399.5H432 M437.5 388V396 M435 395.5H437 M438 390.5H440 M445.5 383V393 M443 391.5H445 M446 385.5H448 M453.5 377V391 M451 387.5H453 M454 382.5H456 M461.5 369V386 M459 381.5H461 M462 376.5H464 M469.5 343V377 M467 376.5H469 M470 356.5H472 M477.5 341V358 M475 357.5H477 M478 351.5H480 M485.5 335V354 M483 351.5H485 M486 336.5H488 M493.5 314V341 M491 336.5H493 M494 322.5H496 M501.5 295V323 M499 322.5H501 M502 310.5H504 M509.5 303V335 M507 309.5H509 M510 323.5H512 M517.5 322V376 M515 323.5H517 M518 358.5H520 M525.5 355V373 M523 358.5H525 M526 359.5H528 M533.5 358V383 M531 359.5H533 M534 378.5H536 M541.5 361V394 M539 378.5H541 M542 362.5H544 M549.5 330V382 M547 362.5H549 M550 346.5H552 M557.5 341V431 M555 346.5H557 M558 395.5H560 M565.5 266V452 M563 395.5H565 M566 276.5H568 M573.5 232V293 M571 276.5H573 M574 235.5H576 M581.5 203V237 M579 236.5H581 M582 206.5H584 M589.5 190V218 M587 206.5H589 M590 197.5H592 M597.5 193V212 M595 196.5H597 M598 198.5H600 M605.5 186V202 M603 198.5H605 M606 187.5H608 M613.5 187V201 M611 191.5H613 M614 195.5H616 M621.5 187V202 M619 195.5H621 M622 198.5H624 M629.5 188V200 M627 198.5H629 M630 192.5H632 M637.5 170V201 M635 192.5H637 M638 173.5H640 M645.5 156V210 M643 173.5H645 M646 199.5H648 M653.5 190V231 M651 199.5H653 M654 231.5H656 M661.5 214V231 M659 231.5H661 M662 218.5H664 M669.5 208V224 M667 218.5H669 M670 211.5H672 M677.5 194V221 M675 211.5H677 M678 218.5H680 M685.5 214V236 M683 218.5H685 M686 223.5H688 M693.5 218V236 M691 223.5H693 M694 219.5H696 M701.5 213V230 M699 220.5H701 M702 219.5H704 M709.5 210V225 M707 219.5H709 M710 213.5H712 M717.5 205V221 M715 213.5H717 M718 209.5H720 M725.5 197V218 M723 209.5H725 M726 203.5H728 M733.5 197V223 M731 203.5H733 M734 222.5H736 M741.5 214V243 M739 222.5H741 M742 240.5H744 M749.5 214V258 M747 240.5H749 M750 244.5H752 M757.5 239V266 M755 244.5H757 M758 256.5H760 M765.5 251V262 M763 256.5H765 M766 254.5H768 M773.5 250V265 M771 254.5H773 M774 258.5H776 M781.5 250V276 M779 258.5H781 M782 251.5H784 M789.5 248V258 M787 251.5H789 M790 254.5H792 M797.5 250V264 M795 254.5H797 M798 257.5H800 M805.5 254V262 M803 260.5H805 M806 257.5H808 M813.5 248V259 M811 257.5H813 M814 255.5H816 M821.5 236V262 M819 255.5H821 M822 238.5H824 M829.5 224V246 M827 239.5H829 M830 237.5H832 M837.5 227V242 M835 237.5H837 M838 237.5H840 M845.5 212V239 M843 238.5H845 M846 214.5H848 M853.5 211V223 M851 214.5H853 M854 221.5H856 M861.5 200V222 M859 221.5H861 M862 203.5H864 M869.5 187V225 M867 203.5H869 M870 221.5H872 M877.5 206V222 M875 221.5H877 M878 217.5H880 M885.5 208V229 M883 217.5H885 M886 220.5H888 M893.5 213V229 M891 219.5H893 M894 225.5H896 M901.5 203V244 M899 225.5H901 M902 240.5H904 M909.5 221V243 M907 241.5H909 M910 237.5H912 M917.5 226V266 M915 237.5H917 M918 262.5H920 M925.5 217V324 M923 263.5H925 M926 254.5H928 M933.5 213V298 M931 254.5H933 M934 281.5H936 M941.5 266V304 M939 279.5H941 M942 274.5H944 M949.5 225V278 M947 274.5H949 M950 227.5H952 M957.5 208V231 M955 227.5H957 M958 223.5H960 M965.5 213V227 M963 222.5H965 M966 219.5H968 M973.5 215V228 M971 220.5H973 M974 220.5H976 M981.5 214V225 M979 220.5H981 M982 225.5H984 M989.5 222V230 M987 225.5H989 M990 227.5H992 M997.5 219V230 M995 227.5H997 M998 223.5H1000 M1005.5 222V243 M1003 223.5H1005 M1006 240.5H1008 M1013.5 216V256 M1011 240.5H1013 M1014 241.5H1016 M1021.5 226V246 M1019 241.5H1021 M1022 227.5H1024 M1029.5 215V234 M1027 227.5H1029 M1030 217.5H1032 M1037.5 211V227 M1035 219.5H1037 M1038 220.5H1040 M1045.5 214V238 M1043 220.5H1045 M1046 216.5H1048 M1053.5 203V221 M1051 217.5H1053 M1054 210.5H1056 M1061.5 205V251 M1059 210.5H1061 M1062 248.5H1064 M1069.5 242V264 M1067 247.5H1069 M1070 252.5H1072 M1077.5 223V255 M1075 253.5H1077 M1078 234.5H1080 M1085.5 226V238 M1083 234.5H1085 M1086 231.5H1088 M1093.5 224V248 M1091 230.5H1093 M1094 235.5H1096 M1101.5 180V244 M1099 236.5H1101 M1102 185.5H1104 M1109.5 180V250 M1107 185.5H1109 M1110 234.5H1112 M1117.5 220V261 M1115 233.5H1117 M1118 259.5H1120 M1125.5 215V269 M1123 259.5H1125 M1126 217.5H1128 M1133.5 207V235 M1131 217.5H1133 M1134 233.5H1136 M1141.5 227V243 M1139 233.5H1141 M1142 237.5H1144 M1149.5 231V241 M1147 238.5H1149 M1150 233.5H1152 M1157.5 218V237 M1155 234.5H1157 M1158 222.5H1160 M1165.5 222V231 M1163 222.5H1165 M1166 229.5H1168 M1173.5 226V231 M1171 228.5H1173 M1174 228.5H1176 M1181.5 226V237 M1179 227.5H1181 M1182 235.5H1184 M1189.5 217V236 M1187 235.5H1189 M1190 224.5H1192 M1197.5 211V235 M1195 224.5H1197 M1198 230.5H1200 M1205.5 222V235 M1203 230.5H1205 M1206 232.5H1208 M1213.5 231V250 M1211 232.5H1213 M1214 248.5H1216 M1221.5 242V253 M1219 249.5H1221 M1222 250.5H1224 M1229.5 223V253 M1227 250.5H1229 M1230 224.5H1232 M1237.5 216V231 M1235 223.5H1237 M1238 220.5H1240 M1245.5 218V241 M1243 220.5H1245 M1246 222.5H1248 M1253.5 212V227 M1251 222.5H1253 M1254 214.5H1256 M1261.5 203V222 M1259 214.5H1261 M1262 205.5H1264 M1269.5 202V218 M1267 205.5H1269 M1270 218.5H1272 M1277.5 211V235 M1275 218.5H1277 M1278 216.5H1280 M1285.5 209V263 M1283 217.5H1285 M1286 229.5H1288 M1293.5 228V265 M1291 229.5H1293 M1294 239.5H1296 M1301.5 230V298 M1299 238.5H1301 M1302 238.5H1304 M1309.5 231V274 M1307 238.5H1309 M1310 266.5H1312 M1317.5 259V282 M1315 267.5H1317 M1318 265.5H1320 M1325.5 257V275 M1323 265.5H1325 M1326 261.5H1328 M1333.5 250V271 M1331 261.5H1333 M1334 264.5H1336 M1341.5 254V266 M1339 264.5H1341 M1342 259.5H1344 M1349.5 255V264 M1347 259.5H1349 M1350 262.5H1352 M1357.5 260V266 M1355 262.5H1357 M1358 265.5H1360 M1365.5 261V266 M1363 265.5H1365 M1366 262.5H1368 M1373.5 249V267 M1371 262.5H1373 M1374 251.5H1376 M1381.5 233V254 M1379 251.5H1381 M1382 235.5H1384 M1389.5 220V240 M1387 236.5H1389 M1390 233.5H1392 M1397.5 225V239 M1395 233.5H1397 M1398 238.5H1400 M1405.5 238V248 M1403 239.5H1405 M1406 246.5H1408 M1413.5 236V254 M1411 246.5H1413 M1414 238.5H1416 M1421.5 230V244 M1419 237.5H1421 M1422 234.5H1424 M1429.5 224V251 M1427 234.5H1429 M1430 249.5H1432 M1437.5 234V250 M1435 249.5H1437 M1438 246.5H1440 M1445.5 228V249 M1443 246.5H1445 M1446 231.5H1448 M1453.5 227V237 M1451 231.5H1453 M1454 230.5H1456 M1461.5 216V231 M1459 230.5H1461 M1462 222.5H1464 M1469.5 107V234 M1467 222.5H1469 M1470 156.5H1472" stroke="#00ff00" stroke-width="1" fill="none"/>
<path d="M1477 87H1489L1483 93Z" fill="#778899" shape-rendering="auto"/>
<path d="M1474 187.5H1846M1474 267.5H1846" stroke="#ffd700" stroke-width="1" stroke-dasharray="4 1" fill="none"/>
<rect x="1856" y="149" width="56" height="14" fill="#fff"/>
</svg>
<svg width="1920" height="932" viewBox="0 0 1920 932">
<text x="9" y="101" font-size="12" fill="#fff" font-family='"Liberation Sans", "Noto Sans CJK SC", sans-serif' textLength="64" lengthAdjust="spacingAndGlyphs">XAUUSD,H1</text>
<text x="82.4" y="101" font-size="12" fill="#fff" font-family='"Liberation Sans", "Noto Sans CJK SC", sans-serif' textLength="45.3" lengthAdjust="spacingAndGlyphs">1814.72</text>
<text x="132.4" y="101" font-size="12" fill="#fff" font-family='"Liberation Sans", "Noto Sans CJK SC", sans-serif' textLength="45.3" lengthAdjust="spacingAndGlyphs">1829.45</text>
<text x="182.5" y="101" font-size="12" fill="#fff" font-family='"Liberation Sans", "Noto Sans CJK SC", sans-serif' textLength="45.3" lengthAdjust="spacingAndGlyphs">1813.19</text>
<text x="232.5" y="101" font-size="12" fill="#fff" font-family='"Liberation Sans", "Noto Sans CJK SC", sans-serif' textLength="45.3" lengthAdjust="spacingAndGlyphs">1823.18</text>
<text x="1861.5" y="94" font-size="12" fill="#fff" font-family='"Liberation Sans", "Noto Sans CJK SC", sans-serif' textLength="44.5" lengthAdjust="spacingAndGlyphs">1831.80</text>
<text x="1861.5" y="143" font-size="12" fill="#fff" font-family='"Liberation Sans", "Noto Sans CJK SC", sans-serif' textLength="44.5" lengthAdjust="spacingAndGlyphs">1825.50</text>
<text x="1861.5" y="192" font-size="12" fill="#fff" font-family='"Liberation Sans", "Noto Sans CJK SC", sans-serif' textLength="44.5" lengthAdjust="spacingAndGlyphs">1819.10</text>
<text x="1861.5" y="241" font-size="12" fill="#fff" font-family='"Liberation Sans", "Noto Sans CJK SC", sans-serif' textLength="44.5" lengthAdjust="spacingAndGlyphs">1812.80</text>
<text x="1861.5" y="290" font-size="12" fill="#fff" font-family='"Liberation Sans", "Noto Sans CJK SC", sans-serif' textLength="44.5" lengthAdjust="spacingAndGlyphs">1806.50</text>
<text x="1861.5" y="339" font-size="12" fill="#fff" font-family='"Liberation Sans", "Noto Sans CJK SC", sans-serif' textLength="44.5" lengthAdjust="spacingAndGlyphs">1800.20</text>
<text x="1861.5" y="388" font-size="12" fill="#fff" font-family='"Liberation Sans", "Noto Sans CJK SC", sans-serif' textLength="44.5" lengthAdjust="spacingAndGlyphs">1793.80</text>
<text x="1861.5" y="437" font-size="12" fill="#fff" font-family='"Liberation Sans", "Noto Sans CJK SC", sans-serif' textLength="44.5" lengthAdjust="spacingAndGlyphs">1787.50</text>
<text x="1861.5" y="486" font-size="12" fill="#fff" font-family='"Liberation Sans", "Noto Sans CJK SC", sans-serif' textLength="44.5" lengthAdjust="spacingAndGlyphs">1781.20</text>
<text x="1861.5" y="161" font-size="12" fill="#000" font-family='"Liberation Sans", "Noto Sans CJK SC", sans-serif' textLength="44.5" lengthAdjust="spacingAndGlyphs">1823.18</text>
<text x="4" y="516" font-size="12" fill="#fff" font-family='"Liberation Sans", "Noto Sans CJK SC", sans-serif' textLength="71" lengthAdjust="spacingAndGlyphs">24 Aug 2021</text>
<text x="100" y="516" font-size="12" fill="#fff" font-family='"Liberation Sans", "Noto Sans CJK SC", sans-serif' textLength="75.7" lengthAdjust="spacingAndGlyphs">25 Aug 05:00</text>
<text x="196" y="516" font-size="12" fill="#fff" font-family='"Liberation Sans", "Noto Sans CJK SC", sans-serif' textLength="75.7" lengthAdjust="spacingAndGlyphs">25 Aug 17:00</text>
<text x="292" y="516" font-size="12" fill="#fff" font-family='"Liberation Sans", "Noto Sans CJK SC", sans-serif' textLength="75.7" lengthAdjust="spacingAndGlyphs">26 Aug 06:00</text>
<text x="388" y="516" font-size="12" fill="#fff" font-family='"Liberation Sans", "Noto Sans CJK SC", sans-serif' textLength="75.7" lengthAdjust="spacingAndGlyphs">26 Aug 18:00</text>
<text x="484" y="516" font-size="12" fill="#fff" font-family='"Liberation Sans", "Noto Sans CJK SC", sans-serif' textLength="75.7" lengthAdjust="spacingAndGlyphs">27 Aug 07:00</text>
<text x="580" y="516" font-size="12" fill="#fff" font-family='"Liberation Sans", "Noto Sans CJK SC", sans-serif' textLength="75.7" lengthAdjust="spacingAndGlyphs">27 Aug 19:00</text>
<text x="676" y="516" font-size="12" fill="#fff" font-family='"Liberation Sans", "Noto Sans CJK SC", sans-serif' textLength="75.7" lengthAdjust="spacingAndGlyphs">30 Aug 08:00</text>
<text x="772" y="516" font-size="12" fill="#fff" font-family='"Liberation Sans", "Noto Sans CJK SC", sans-serif' textLength="75.7" lengthAdjust="spacingAndGlyphs">30 Aug 20:00</text>
<text x="868" y="516" font-size="12" fill="#fff" font-family='"Liberation Sans", "Noto Sans CJK SC", sans-serif' textLength="75.7" lengthAdjust="spacingAndGlyphs">31 Aug 09:00</text>
<text x="964" y="516" font-size="12" fill="#fff" font-family='"Liberation Sans", "Noto Sans CJK SC", sans-serif' textLength="75.7" lengthAdjust="spacingAndGlyphs">31 Aug 21:00</text>
<text x="1060" y="516" font-size="12" fill="#fff" font-family='"Liberation Sans", "Noto Sans CJK SC", sans-serif' textLength="67.7" lengthAdjust="spacingAndGlyphs">1 Sep 10:00</text>
<text x="1156" y="516" font-size="12" fill="#fff" font-family='"Liberation Sans", "Noto Sans CJK SC", sans-serif' textLength="67.7" lengthAdjust="spacingAndGlyphs">1 Sep 22:00</text>
<text x="1252" y="516" font-size="12" fill="#fff" font-family='"Liberation Sans", "Noto Sans CJK SC", sans-serif' textLength="67.7" lengthAdjust="spacingAndGlyphs">2 Sep 11:00</text>
<text x="1348" y="516" font-size="12" fill="#fff" font-family='"Liberation Sans", "Noto Sans CJK SC", sans-serif' textLength="67.7" lengthAdjust="spacingAndGlyphs">2 Sep 23:00</text>
<text x="1444" y="516" font-size="12" fill="#fff" font-family='"Liberation Sans", "Noto Sans CJK SC", sans-serif' textLength="67.7" lengthAdjust="spacingAndGlyphs">3 Sep 12:00</text>
</svg>
<div class="ytxt" style="top:135px"><b>单币对冲</b><i> </i>EA Final</div>
<div class="ytxt" style="top:155px"><b>点差：</b>1.00</div>
<div class="ytxt" style="top:195px"><b>建仓模式：瞬间建仓</b></div>
<div class="ytxt" style="top:215px"><b>加仓模式：数列加仓</b></div>
<div class="ytxt" style="top:235px"><b>加仓网格：固定网格</b></div>
<div class="ytxt" style="top:275px"><b>账户类型：模拟账户</b></div>
<div class="ytxt" style="top:295px"><b>允许</b>EA<b>交易：允许</b></div>
<div class="ytxt" style="top:315px"><b>账户名称：</b>gfggvfgdrd</div>
<div class="ytxt" style="top:335px"><b>账户号码：</b>66555851</div>
<div class="ytxt" style="top:355px"><b>账户杠杆：</b>500</div>
<div class="ytxt" style="top:375px"><b>账户余额：</b>3.04</div>
<div class="ytxt" style="top:395px"><b>账户净值：</b>3.04</div>
<div class="ytxt" style="top:415px"><b>可用预付款：</b>3.04</div>
<div class="ytxt" style="top:435px"><b>已用预付款：</b>0.00</div>
<div class="ytxt" style="top:455px"><b>最大跌幅</b><i>(</i><b>金额</b><i>)</i><b>：</b>4910.60</div>
<div class="ytxt" style="top:475px"><b>最大跌幅</b><i>(</i><b>比例</b><i>)</i><b>：</b>50.5%</div>
<svg width="1920" height="932" viewBox="0 0 1920 932">
<text x="21" y="544" font-size="15" fill="#6d6d6d" font-family='"Liberation Sans", "Noto Sans CJK SC", sans-serif' textLength="86" lengthAdjust="spacingAndGlyphs">XAUUSD,H1</text>
<text x="137" y="544" font-size="15" fill="#6d6d6d" font-family='"Liberation Sans", "Noto Sans CJK SC", sans-serif' textLength="88" lengthAdjust="spacingAndGlyphs">XAUUSD,H4</text>
<text x="253" y="544" font-size="15" fill="#6d6d6d" font-family='"Liberation Sans", "Noto Sans CJK SC", sans-serif' textLength="91" lengthAdjust="spacingAndGlyphs">XTIUSD,M15</text>
<text x="373" y="544" font-size="15" fill="#6d6d6d" font-family='"Liberation Sans", "Noto Sans CJK SC", sans-serif' textLength="90" lengthAdjust="spacingAndGlyphs">XAUUSD,M1</text>
<text x="492" y="544" font-size="15" fill="#6d6d6d" font-family='"Liberation Sans", "Noto Sans CJK SC", sans-serif' textLength="84" lengthAdjust="spacingAndGlyphs">GBPUSD,H1</text>
<text x="604" y="544" font-size="15" fill="#6d6d6d" font-family='"Liberation Sans", "Noto Sans CJK SC", sans-serif' textLength="142" lengthAdjust="spacingAndGlyphs">XAUUSD,H1 (visual)</text>
<path d="M123.5 529V547 M239.5 529V547 M359.5 529V547 M479.5 529V547 M591.5 529V547" stroke="#6d6d6d" stroke-width="1" shape-rendering="crispEdges"/>
<rect x="760" y="526" width="166" height="23" fill="#fff" stroke="none" shape-rendering="crispEdges"/>
<path d="M759.5 526V549.5H926.5V526" stroke="#000" stroke-width="1" fill="none" shape-rendering="crispEdges"/>
<text x="772" y="544" font-size="15" fill="#000" font-family='"Liberation Sans", "Noto Sans CJK SC", sans-serif' textLength="142" lengthAdjust="spacingAndGlyphs">XAUUSD,H1 (visual)</text>
<path d="M1883.6 533.2L1879.3 536.9L1883.6 540.6Z M1903.9 533.2L1908 536.9L1903.9 540.6Z" fill="#a0a0a0"/>
</svg>
<div class="abs" style="left:20px;top:556px;width:1895px;height:363px;background:#fff"></div>
<div class="abs" style="left:20px;top:556px;width:1895px;height:1px;background:#a0a0a0"></div>
<div class="abs" style="left:20px;top:556px;width:1px;height:376px;background:#a0a0a0;z-index:2"></div>
<div class="abs" style="left:3px;top:574px;width:16px;height:358px;background:linear-gradient(#dde7f3,#bccbe0)"></div>
<div class="abs" style="left:21px;top:918px;width:1894px;height:1px;background:#000"></div>
<div class="abs" style="left:21px;top:919px;width:1899px;height:13px;background:#f0f0f0"></div>
<svg width="1920" height="932" viewBox="0 0 1920 932" shape-rendering="crispEdges">
<path d="M65.5 562V831M65.5 834V835M65.5 838V898 M105.5 562V831M105.5 834V835M105.5 838V898 M145.5 562V831M145.5 834V835M145.5 838V898 M185.5 562V831M185.5 834V835M185.5 838V898 M225.5 562V831M225.5 834V835M225.5 838V898 M265.5 562V831M265.5 834V835M265.5 838V898 M305.5 562V831M305.5 834V835M305.5 838V898 M345.5 562V831M345.5 834V835M345.5 838V898 M385.5 562V831M385.5 834V835M385.5 838V898 M425.5 562V831M425.5 834V835M425.5 838V898 M465.5 562V831M465.5 834V835M465.5 838V898 M505.5 562V831M505.5 834V835M505.5 838V898 M545.5 562V831M545.5 834V835M545.5 838V898 M585.5 562V831M585.5 834V835M585.5 838V898 M625.5 562V831M625.5 834V835M625.5 838V898 M665.5 562V831M665.5 834V835M665.5 838V898 M705.5 562V831M705.5 834V835M705.5 838V898 M745.5 562V831M745.5 834V835M745.5 838V898 M785.5 562V831M785.5 834V835M785.5 838V898 M825.5 562V831M825.5 834V835M825.5 838V898 M865.5 562V831M865.5 834V835M865.5 838V898 M905.5 562V831M905.5 834V835M905.5 838V898 M945.5 562V831M945.5 834V835M945.5 838V898 M985.5 562V831M985.5 834V835M985.5 838V898 M1025.5 562V831M1025.5 834V835M1025.5 838V898 M1065.5 562V831M1065.5 834V835M1065.5 838V898 M1105.5 562V831M1105.5 834V835M1105.5 838V898 M1145.5 562V831M1145.5 834V835M1145.5 838V898 M1185.5 562V831M1185.5 834V835M1185.5 838V898 M1225.5 562V831M1225.5 834V835M1225.5 838V898 M1265.5 562V831M1265.5 834V835M1265.5 838V898 M1305.5 562V831M1305.5 834V835M1305.5 838V898 M1345.5 562V831M1345.5 834V835M1345.5 838V898 M1385.5 562V831M1385.5 834V835M1385.5 838V898 M1425.5 562V831M1425.5 834V835M1425.5 838V898 M1465.5 562V831M1465.5 834V835M1465.5 838V898 M1505.5 562V831M1505.5 834V835M1505.5 838V898 M1545.5 562V831M1545.5 834V835M1545.5 838V898 M1585.5 562V831M1585.5 834V835M1585.5 838V898 M1625.5 562V831M1625.5 834V835M1625.5 838V898 M1665.5 562V831M1665.5 834V835M1665.5 838V898 M1705.5 562V831M1705.5 834V835M1705.5 838V898 M1745.5 562V831M1745.5 834V835M1745.5 838V898 M1785.5 562V831M1785.5 834V835M1785.5 838V898 M1825.5 562V831M1825.5 834V835M1825.5 838V898 M26 590.5H1859 M26 630.5H1859 M26 670.5H1859 M26 710.5H1859 M26 750.5H1859 M26 790.5H1859" stroke="#c0c0c0" stroke-width="1" stroke-dasharray="3 3" fill="none"/>
<path d="M32.5 850V897 M38.5 861V897 M44.5 876V897 M63.5 884V897 M69.5 895V897 M76.5 893V897 M82.5 890V897 M88.5 838V897 M94.5 861V897 M101.5 876V897 M120.5 884V897 M126.5 895V897 M132.5 893V897 M138.5 890V897 M145.5 838V897 M151.5 861V897 M170.5 893V897 M176.5 895V897 M182.5 876V897 M189.5 890V897 M195.5 884V897 M214.5 895V897 M220.5 893V897 M226.5 890V897 M232.5 884V897 M239.5 876V897 M245.5 861V897 M251.5 838V897 M264.5 868V897 M270.5 880V897 M276.5 887V897 M289.5 891V897 M301.5 896V897 M308.5 894V897 M320.5 868V897 M326.5 880V897 M333.5 887V897 M352.5 891V897 M364.5 896V897 M370.5 894V897 M383.5 868V897 M389.5 880V897 M395.5 887V897 M408.5 891V897 M414.5 896V897 M427.5 894V897 M439.5 868V897 M446.5 880V897 M452.5 887V897 M464.5 891V897 M477.5 896V897 M490.5 894V897 M496.5 868V897 M502.5 880V897 M508.5 887V897 M527.5 891V897 M540.5 896V897 M546.5 894V897 M552.5 868V897 M558.5 880V897 M565.5 887V897 M584.5 891V897 M590.5 894V897 M602.5 896V897 M609.5 891V897 M615.5 894V897 M621.5 896V897 M665.5 896V897 M671.5 894V897 M678.5 891V897 M684.5 887V897 M690.5 880V897 M696.5 868V897 M734.5 896V897 M740.5 894V897 M747.5 891V897 M753.5 886V897 M759.5 879V897 M765.5 889V897 M772.5 892V897 M778.5 895V897 M809.5 896V897 M828.5 889V897 M834.5 892V897 M841.5 895V897 M872.5 896V897 M928.5 896V897 M935.5 895V897 M941.5 892V897 M947.5 889V897 M997.5 894V897 M1004.5 895V897 M1060.5 894V897 M1066.5 895V897 M1123.5 894V897 M1129.5 895V897 M1236.5 895V897 M1242.5 894V897" stroke="#00aa00" stroke-width="1" fill="none"/>
<path d="M25.5 561.5H1859.5V831.5H25.5Z M25.5 833.5H1859.5V898.5H25.5Z" stroke="#000" stroke-width="1" fill="none"/>
<path d="M65.5 899V900.4 M105.5 899V900.4 M145.5 899V900.4 M185.5 899V900.4 M225.5 899V900.4 M265.5 899V900.4 M305.5 899V900.4 M345.5 899V900.4 M385.5 899V900.4 M425.5 899V900.4 M465.5 899V900.4 M505.5 899V900.4 M545.5 899V900.4 M585.5 899V900.4 M625.5 899V900.4 M665.5 899V900.4 M705.5 899V900.4 M745.5 899V900.4 M785.5 899V900.4 M825.5 899V900.4 M865.5 899V900.4 M905.5 899V900.4 M945.5 899V900.4 M985.5 899V900.4 M1025.5 899V900.4 M1065.5 899V900.4 M1105.5 899V900.4 M1145.5 899V900.4 M1185.5 899V900.4 M1225.5 899V900.4 M1265.5 899V900.4 M1305.5 899V900.4 M1345.5 899V900.4 M1385.5 899V900.4 M1425.5 899V900.4 M1465.5 899V900.4 M1505.5 899V900.4 M1545.5 899V900.4 M1585.5 899V900.4 M1625.5 899V900.4 M1665.5 899V900.4 M1705.5 899V900.4 M1745.5 899V900.4 M1785.5 899V900.4 M1825.5 899V900.4 M1860 590.5H1861.4 M1860 630.5H1861.4 M1860 670.5H1861.4 M1860 710.5H1861.4 M1860 750.5H1861.4 M1860 790.5H1861.4 M1860 830.5H1861.4" stroke="#000" stroke-width="1" fill="none"/>
</svg>
<svg width="1920" height="932" viewBox="0 0 1920 932">
<path d="M26.5 587.8 L31.5 588.6 L31.5 590.0 L57.0 590.0 L57.8 589.8 L87.0 590.6 L87.0 591.6 L107.0 591.6 L107.0 591.4 L144.0 592.3 L144.0 593.6 L170.2 593.6 L170.2 593.4 L195.4 593.5 L201.6 714.2 L251.3 714.2 L265.4 713.9 L320.0 714.5 L380.0 715.2 L402.0 715.4 L404.0 715.9 L435.0 716.5 L458.0 716.7 L460.0 717.0 L492.0 717.7 L508.0 717.9 L510.0 718.0 L550.0 718.7 L558.0 718.8 L640.7 719.7 L646.5 776.3 L696.0 776.3 L697.0 776.9 L703.7 801.4 L758.8 801.4 L826.0 801.4 L826.5 802.4 L878.4 802.4 L885.0 802.2 L892.0 816.4 L946.9 816.4 L1180.0 816.5 L1186.2 823.2 L1240.0 823.2 L1293.8 823.8 L1298.8 827.2 L1340.0 827.2 L1346.0 829.2 L1380.0 829.2 L1522.0 829.5 L1522.5 830.5 L1543.6 830.5 L1857.5 830.5" stroke="#00aa00" stroke-width="1" fill="none" shape-rendering="crispEdges"/>
<path d="M26.5 587.2 L32.8 587.2 L32.8 588.6 L57.8 588.6 L57.8 589.3 L82.8 589.3 L82.8 590.1 L107.0 590.1 L107.0 591.1 L138.4 591.1 L138.4 592.1 L170.2 592.1 L170.2 593.0 L195.4 593.0 L198.7 595.1 L206.7 595.9 L213.1 598.8 L221.2 604.0 L227.6 611.2 L234.0 623.3 L238.9 636.2 L242.1 649.0 L245.3 665.1 L247.7 681.2 L250.2 700.5 L251.3 713.4 L258.2 713.4 L259.8 712.6 L263.8 712.6 L265.4 713.7 L319.7 713.7 L320.5 714.6 L402.2 714.6 L403.0 715.8 L458.4 715.8 L459.2 716.9 L508.1 716.9 L509.0 717.8 L558.8 717.8 L559.5 718.8 L640.3 718.8 L641.2 719.7 L653.4 719.7 L660.0 722.1 L667.5 725.3 L675.0 729.6 L680.6 735.6 L686.2 743.5 L690.0 751.6 L692.8 761.9 L694.7 771.2 L696.0 775.9 L714.4 775.9 L723.8 777.2 L735.0 779.3 L742.5 782.1 L750.0 787.2 L754.7 792.8 L758.8 800.9 L878.4 800.9 L879.2 801.8 L909.4 801.8 L922.5 804.1 L935.6 807.2 L941.2 810.6 L946.9 815.9 L1203.8 815.8 L1205.0 817.0 L1217.5 817.0 L1218.3 818.2 L1223.8 818.2 L1224.5 819.5 L1236.2 820.0 L1240.0 822.5 L1310.0 822.5 L1310.8 823.8 L1323.8 823.8 L1324.5 825.0 L1336.2 825.0 L1337.0 826.8 L1367.5 826.8 L1368.3 828.0 L1380.0 828.0 L1380.8 828.8 L1543.6 828.8 L1544.4 830.3 L1857.5 830.3" stroke="#0000aa" stroke-width="2" fill="none" stroke-linejoin="round" shape-rendering="crispEdges"/>
<rect x="28" y="564" width="64" height="15" fill="#fff"/><rect x="28" y="836" width="28" height="14" fill="#fff"/>
<text x="30" y="577" font-size="12" fill="#0000b4" font-family='"Liberation Sans", "Noto Sans CJK SC", sans-serif'>余额</text>
<text x="58" y="577" font-size="12" fill="#000" font-family='"Liberation Sans", "Noto Sans CJK SC", sans-serif'>/</text>
<text x="66.5" y="577" font-size="12" fill="#00aa00" font-family='"Liberation Sans", "Noto Sans CJK SC", sans-serif'>净值</text>
<text x="30" y="849" font-size="12" fill="#000" font-family='"Liberation Sans", "Noto Sans CJK SC", sans-serif'>手数</text>
<text x="1865" y="596" font-size="12" fill="#000" font-family='"Liberation Sans", "Noto Sans CJK SC", sans-serif'>9850</text>
<text x="1865" y="636" font-size="12" fill="#000" font-family='"Liberation Sans", "Noto Sans CJK SC", sans-serif'>8209</text>
<text x="1865" y="676" font-size="12" fill="#000" font-family='"Liberation Sans", "Noto Sans CJK SC", sans-serif'>6567</text>
<text x="1865" y="716" font-size="12" fill="#000" font-family='"Liberation Sans", "Noto Sans CJK SC", sans-serif'>4925</text>
<text x="1865" y="756" font-size="12" fill="#000" font-family='"Liberation Sans", "Noto Sans CJK SC", sans-serif'>3283</text>
<text x="1865" y="796" font-size="12" fill="#000" font-family='"Liberation Sans", "Noto Sans CJK SC", sans-serif'>1642</text>
<text x="1865" y="836" font-size="12" fill="#000" font-family='"Liberation Sans", "Noto Sans CJK SC", sans-serif'>0</text>
<text x="27" y="912" font-size="12" fill="#000" font-family='"Liberation Sans", "Noto Sans CJK SC", sans-serif'>0</text>
<text x="64" y="912" font-size="12" fill="#000" text-anchor="end" font-family='"Liberation Sans", "Noto Sans CJK SC", sans-serif'>7</text>
<text x="104" y="912" font-size="12" fill="#000" text-anchor="end" font-family='"Liberation Sans", "Noto Sans CJK SC", sans-serif'>13</text>
<text x="144" y="912" font-size="12" fill="#000" text-anchor="end" font-family='"Liberation Sans", "Noto Sans CJK SC", sans-serif'>20</text>
<text x="184" y="912" font-size="12" fill="#000" text-anchor="end" font-family='"Liberation Sans", "Noto Sans CJK SC", sans-serif'>26</text>
<text x="224" y="912" font-size="12" fill="#000" text-anchor="end" font-family='"Liberation Sans", "Noto Sans CJK SC", sans-serif'>32</text>
<text x="264" y="912" font-size="12" fill="#000" text-anchor="end" font-family='"Liberation Sans", "Noto Sans CJK SC", sans-serif'>39</text>
<text x="304" y="912" font-size="12" fill="#000" text-anchor="end" font-family='"Liberation Sans", "Noto Sans CJK SC", sans-serif'>45</text>
<text x="344" y="912" font-size="12" fill="#000" text-anchor="end" font-family='"Liberation Sans", "Noto Sans CJK SC", sans-serif'>52</text>
<text x="384" y="912" font-size="12" fill="#000" text-anchor="end" font-family='"Liberation Sans", "Noto Sans CJK SC", sans-serif'>58</text>
<text x="424" y="912" font-size="12" fill="#000" text-anchor="end" font-family='"Liberation Sans", "Noto Sans CJK SC", sans-serif'>64</text>
<text x="464" y="912" font-size="12" fill="#000" text-anchor="end" font-family='"Liberation Sans", "Noto Sans CJK SC", sans-serif'>71</text>
<text x="504" y="912" font-size="12" fill="#000" text-anchor="end" font-family='"Liberation Sans", "Noto Sans CJK SC", sans-serif'>77</text>
<text x="544" y="912" font-size="12" fill="#000" text-anchor="end" font-family='"Liberation Sans", "Noto Sans CJK SC", sans-serif'>83</text>
<text x="584" y="912" font-size="12" fill="#000" text-anchor="end" font-family='"Liberation Sans", "Noto Sans CJK SC", sans-serif'>90</text>
<text x="624" y="912" font-size="12" fill="#000" text-anchor="end" font-family='"Liberation Sans", "Noto Sans CJK SC", sans-serif'>96</text>
<text x="664" y="912" font-size="12" fill="#000" text-anchor="end" font-family='"Liberation Sans", "Noto Sans CJK SC", sans-serif'>103</text>
<text x="704" y="912" font-size="12" fill="#000" text-anchor="end" font-family='"Liberation Sans", "Noto Sans CJK SC", sans-serif'>109</text>
<text x="744" y="912" font-size="12" fill="#000" text-anchor="end" font-family='"Liberation Sans", "Noto Sans CJK SC", sans-serif'>115</text>
<text x="784" y="912" font-size="12" fill="#000" text-anchor="end" font-family='"Liberation Sans", "Noto Sans CJK SC", sans-serif'>122</text>
<text x="824" y="912" font-size="12" fill="#000" text-anchor="end" font-family='"Liberation Sans", "Noto Sans CJK SC", sans-serif'>128</text>
<text x="864" y="912" font-size="12" fill="#000" text-anchor="end" font-family='"Liberation Sans", "Noto Sans CJK SC", sans-serif'>134</text>
<text x="904" y="912" font-size="12" fill="#000" text-anchor="end" font-family='"Liberation Sans", "Noto Sans CJK SC", sans-serif'>141</text>
<text x="944" y="912" font-size="12" fill="#000" text-anchor="end" font-family='"Liberation Sans", "Noto Sans CJK SC", sans-serif'>147</text>
<text x="984" y="912" font-size="12" fill="#000" text-anchor="end" font-family='"Liberation Sans", "Noto Sans CJK SC", sans-serif'>153</text>
<text x="1024" y="912" font-size="12" fill="#000" text-anchor="end" font-family='"Liberation Sans", "Noto Sans CJK SC", sans-serif'>160</text>
<text x="1064" y="912" font-size="12" fill="#000" text-anchor="end" font-family='"Liberation Sans", "Noto Sans CJK SC", sans-serif'>166</text>
<text x="1104" y="912" font-size="12" fill="#000" text-anchor="end" font-family='"Liberation Sans", "Noto Sans CJK SC", sans-serif'>173</text>
<text x="1144" y="912" font-size="12" fill="#000" text-anchor="end" font-family='"Liberation Sans", "Noto Sans CJK SC", sans-serif'>179</text>
<text x="1184" y="912" font-size="12" fill="#000" text-anchor="end" font-family='"Liberation Sans", "Noto Sans CJK SC", sans-serif'>185</text>
<text x="1224" y="912" font-size="12" fill="#000" text-anchor="end" font-family='"Liberation Sans", "Noto Sans CJK SC", sans-serif'>192</text>
<text x="1264" y="912" font-size="12" fill="#000" text-anchor="end" font-family='"Liberation Sans", "Noto Sans CJK SC", sans-serif'>198</text>
<text x="1304" y="912" font-size="12" fill="#000" text-anchor="end" font-family='"Liberation Sans", "Noto Sans CJK SC", sans-serif'>204</text>
<text x="1344" y="912" font-size="12" fill="#000" text-anchor="end" font-family='"Liberation Sans", "Noto Sans CJK SC", sans-serif'>211</text>
<text x="1384" y="912" font-size="12" fill="#000" text-anchor="end" font-family='"Liberation Sans", "Noto Sans CJK SC", sans-serif'>217</text>
<text x="1424" y="912" font-size="12" fill="#000" text-anchor="end" font-family='"Liberation Sans", "Noto Sans CJK SC", sans-serif'>224</text>
<text x="1464" y="912" font-size="12" fill="#000" text-anchor="end" font-family='"Liberation Sans", "Noto Sans CJK SC", sans-serif'>230</text>
<text x="1504" y="912" font-size="12" fill="#000" text-anchor="end" font-family='"Liberation Sans", "Noto Sans CJK SC", sans-serif'>236</text>
<text x="1544" y="912" font-size="12" fill="#000" text-anchor="end" font-family='"Liberation Sans", "Noto Sans CJK SC", sans-serif'>243</text>
<text x="1584" y="912" font-size="12" fill="#000" text-anchor="end" font-family='"Liberation Sans", "Noto Sans CJK SC", sans-serif'>249</text>
<text x="1624" y="912" font-size="12" fill="#000" text-anchor="end" font-family='"Liberation Sans", "Noto Sans CJK SC", sans-serif'>255</text>
<text x="1664" y="912" font-size="12" fill="#000" text-anchor="end" font-family='"Liberation Sans", "Noto Sans CJK SC", sans-serif'>262</text>
<text x="1704" y="912" font-size="12" fill="#000" text-anchor="end" font-family='"Liberation Sans", "Noto Sans CJK SC", sans-serif'>268</text>
<text x="1744" y="912" font-size="12" fill="#000" text-anchor="end" font-family='"Liberation Sans", "Noto Sans CJK SC", sans-serif'>274</text>
<text x="1784" y="912" font-size="12" fill="#000" text-anchor="end" font-family='"Liberation Sans", "Noto Sans CJK SC", sans-serif'>281</text>
<text x="1824" y="912" font-size="12" fill="#000" text-anchor="end" font-family='"Liberation Sans", "Noto Sans CJK SC", sans-serif'>287</text>
<path d="M6.3 559.4L13.7 565.8M13.7 559.4L6.3 565.8" stroke="#000" stroke-width="1.9" fill="none"/>
</svg>
<svg width="1920" height="932" viewBox="0 0 1920 932">
<rect x="134.500" y="918" width="68" height="16" fill="#fff"/>
<path d="M134.500 919V934M202.500 919V934" stroke="#000" stroke-width="1" shape-rendering="crispEdges"/>
<text x="36" y="935.5" font-size="15" fill="#6d6d6d" font-family='"Liberation Sans", "Noto Sans CJK SC", sans-serif'>设置</text>
<text x="91" y="935.5" font-size="15" fill="#6d6d6d" font-family='"Liberation Sans", "Noto Sans CJK SC", sans-serif'>结果</text>
<text x="146" y="935.5" font-size="15" fill="#000" font-family='"Liberation Sans", "Noto Sans CJK SC", sans-serif'>净值图</text>
<text x="215" y="935.5" font-size="15" fill="#6d6d6d" font-family='"Liberation Sans", "Noto Sans CJK SC", sans-serif'>报告</text>
<text x="270" y="935.5" font-size="15" fill="#6d6d6d" font-family='"Liberation Sans", "Noto Sans CJK SC", sans-serif'>日志</text>
<path d="M78.500 922V934M258.500 922V934M314.500 922V934" stroke="#6d6d6d" stroke-width="1" shape-rendering="crispEdges"/>
<text transform="translate(18,944.5) rotate(-90)" font-size="15" fill="#000" font-family='"Liberation Sans", "Noto Sans CJK SC", sans-serif'>测试</text>
</svg>
</body></html>
